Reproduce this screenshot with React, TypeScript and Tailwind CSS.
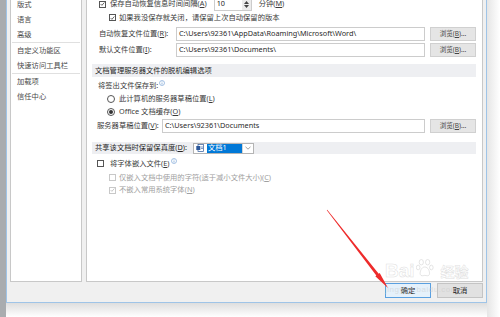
import React from "react";

const FONT = "font-['Noto_Sans','Noto_Sans_CJK_SC',sans-serif]";

function Box({ checked, disabled }: { checked?: boolean; disabled?: boolean }) {
  return (
    <span
      className={`flex h-[7px] w-[7px] shrink-0 items-center justify-center border bg-white ${
        disabled ? "border-[#c8c8c8]" : "border-[#555555]"
      }`}
    >
      {checked && (
        <svg width="6" height="6" viewBox="0 0 6 6">
          <path
            d="M0.8 3.1 L2.3 4.6 L5.2 1.2"
            fill="none"
            stroke={disabled ? "#b4b4b4" : "#333"}
            strokeWidth="0.9"
          />
        </svg>
      )}
    </span>
  );
}

function Radio({ on }: { on?: boolean }) {
  return (
    <span className="flex h-[8px] w-[8px] shrink-0 items-center justify-center rounded-full border border-[#555555] bg-white">
      {on && <span className="h-[4px] w-[4px] rounded-full bg-[#333333]" />}
    </span>
  );
}

function Info() {
  return (
    <svg width="6" height="6" viewBox="0 0 6 6" className="mb-[5px] ml-[1px]">
      <circle cx="3" cy="3" r="2.5" fill="none" stroke="#6c9bd2" strokeWidth="0.6" />
      <path d="M3 2.5v2M3 1.4v0.5" stroke="#6c9bd2" strokeWidth="0.7" />
    </svg>
  );
}

function Field({ value, w }: { value: string; w: string }) {
  return (
    <div className={`flex h-[14px] items-center border border-[#cccccc] bg-white pl-[2px] text-[#2a2a2a] ${w}`}>
      {value}
    </div>
  );
}

function Browse() {
  return (
    <div className="ml-[5px] flex h-[14px] w-[46px] items-center justify-center border border-[#d0d0d0] bg-[#e5e5e5] text-[6.5px] text-[#444444]">
      浏览(<span className="underline">B</span>)...
    </div>
  );
}

const navTop = ["版式", "语言", "高级"];
const navMid = ["自定义功能区", "快速访问工具栏"];
const navBot = ["加载项", "信任中心"];

export default function App() {
  return (
    <div className={`relative flex h-[317px] w-[500px] overflow-hidden bg-white text-[7.3px] leading-none text-[#3a3a3a] ${FONT}`}>
      <div className="w-[6px] shrink-0 bg-[#a9acaf]" />

      <div className="flex w-[481px] shrink-0 flex-col">
        <div className="flex h-[303px] flex-col border-x border-b border-[#9fc4e7] bg-[#f0f0f0]">
          <div className="flex h-[282px] gap-[4px] pl-[3px]">
            {/* left nav */}
            <div className="w-[72px] border-x border-b border-[#c8c8c8] bg-white">
              <div className="-mt-[3px] flex flex-col text-[#4a4a4a]">
                {navTop.map((t) => (
                  <div key={t} className="flex h-[15px] items-center pl-[6px]">{t}</div>
                ))}
                <div className="mx-[1px] h-px bg-[#e0e0e0]" />
                {navMid.map((t) => (
                  <div key={t} className="flex h-[15px] items-center pl-[6px]">{t}</div>
                ))}
                <div className="mx-[1px] h-px bg-[#e0e0e0]" />
                {navBot.map((t) => (
                  <div key={t} className="flex h-[15px] items-center pl-[6px]">{t}</div>
                ))}
              </div>
            </div>

            {/* right panel */}
            <div className="w-[397px] border-x border-b border-[#c8c8c8] bg-white pl-[5px] pr-[6px]">
              <div className="-mt-[3px] flex flex-col">
                <div className="flex h-[14px] items-center pl-[7px]">
                  <Box checked />
                  <span className="ml-[4px]">保存自动恢复信息时间间隔(<span className="underline">A</span>)</span>
                  <div className="ml-[7px] flex h-[14px] w-[38px] items-center border border-[#cccccc] bg-white">
                    <span className="flex-1 pl-[2px] text-[#222222]">10</span>
                    <div className="flex h-full w-[9px] flex-col items-center justify-center gap-[1px] bg-[#ececec]">
                      <svg width="5" height="3" viewBox="0 0 5 3"><path d="M0 3L2.5 0L5 3Z" fill="#444" /></svg>
                      <svg width="5" height="3" viewBox="0 0 5 3"><path d="M0 0L2.5 3L5 0Z" fill="#444" /></svg>
                    </div>
                  </div>
                  <span className="ml-[7px]">分钟(<span className="underline">M</span>)</span>
                </div>

                <div className="flex h-[13px] items-center pl-[17px]">
                  <Box checked />
                  <span className="ml-[3px]">如果我没保存就关闭，请保留上次自动保留的版本</span>
                </div>

                <div className="mt-[3px] flex h-[14px] items-center pl-[7px]">
                  <span className="w-[77px]">自动恢复文件位置(<span className="underline">R</span>):</span>
                  <Field w="w-[249px]" value="C:\Users\92361\AppData\Roaming\Microsoft\Word\" />
                  <Browse />
                </div>

                <div className="mt-[2px] flex h-[14px] items-center pl-[7px]">
                  <span className="w-[77px]">默认文件位置(<span className="underline">I</span>):</span>
                  <Field w="w-[249px]" value="C:\Users\92361\Documents\" />
                  <Browse />
                </div>

                <div className="mt-[7px] flex h-[13px] items-center bg-[#eeeff2] pl-[3px] text-[#262626]">
                  文档管理服务器文件的脱机编辑选项
                </div>

                <div className="mt-[2px] flex h-[13px] items-center pl-[6px]">
                  <span>将签出文件保存到:</span>
                  <Info />
                </div>

                <div className="flex h-[13px] items-center pl-[15px]">
                  <Radio />
                  <span className="ml-[4px]">此计算机的服务器草稿位置(<span className="underline">L</span>)</span>
                </div>

                <div className="flex h-[13px] items-center pl-[15px]">
                  <Radio on />
                  <span className="ml-[4px]">Office 文档缓存(<span className="underline">O</span>)</span>
                </div>

                <div className="mt-[1px] flex h-[14px] items-center pl-[5px]">
                  <span className="w-[65px]">服务器草稿位置(<span className="underline">V</span>):</span>
                  <Field w="w-[263px]" value="C:\Users\92361\Documents" />
                  <Browse />
                </div>

                <div className="mt-[9px] flex h-[12px] items-center bg-[#eeeff2] pl-[3px] text-[#262626]">
                  <span className="w-[98px]">共享该文档时保留保真度(<span className="underline">D</span>):</span>
                  <div className="flex h-[11px] w-[61px] items-center border border-[#b4b4b4] bg-white">
                    <svg width="8" height="8" viewBox="0 0 8 8" className="ml-[2px] shrink-0">
                      <rect x="2" y="0.5" width="5.5" height="7" fill="#fff" stroke="#2b579a" strokeWidth="0.7" />
                      <rect x="0.3" y="2" width="4" height="4" fill="#2b579a" />
                      <path d="M5 3h2M5 4.5h2" stroke="#2b579a" strokeWidth="0.6" />
                    </svg>
                    <span className="ml-[3px] flex h-[9px] flex-1 items-center bg-[#0078d7] pl-[1px] text-white">文档1</span>
                    <span className="flex h-full w-[11px] items-center justify-center border-l border-[#d4d4d4]">
                      <svg width="6" height="4" viewBox="0 0 6 4"><path d="M0.5 0.8L3 3.2L5.5 0.8" fill="none" stroke="#777" strokeWidth="0.7" /></svg>
                    </span>
                  </div>
                </div>

                <div className="mt-[3px] flex h-[13px] items-center pl-[5px]">
                  <Box />
                  <span className="ml-[6px]">将字体嵌入文件(<span className="underline">E</span>)</span>
                  <Info />
                </div>

                <div className="mt-[1px] flex h-[13px] items-center pl-[17px] text-[#a0a0a0]">
                  <Box disabled />
                  <span className="ml-[3px]">仅嵌入文档中使用的字符(适于减小文件大小)(<span className="underline">C</span>)</span>
                </div>

                <div className="flex h-[12px] items-center pl-[17px] text-[#a0a0a0]">
                  <Box checked disabled />
                  <span className="ml-[3px]">不嵌入常用系统字体(<span className="underline">N</span>)</span>
                </div>
              </div>
            </div>
          </div>

          <div className="mt-[1px] flex justify-end gap-[6px] pr-[3px]">
            <div className="flex h-[15px] w-[46px] items-center justify-center border border-[#5aa0e0] bg-[#e5f1fb] text-[#222222]">
              确定
            </div>
            <div className="flex h-[15px] w-[46px] items-center justify-center border border-[#c4c4c4] bg-[#e1e1e1] text-[#222222]">
              取消
            </div>
          </div>
        </div>
        <div className="h-[14px] bg-gradient-to-b from-[#dedede] to-white" />
      </div>

      <div className="w-[13px] shrink-0 bg-gradient-to-r from-[#e6e6e6] to-white" />

      {/* watermark */}
      <div className="pointer-events-none absolute left-[385px] top-[258px] flex flex-col opacity-70">
        <div className="flex items-end">
          <span className="font-['Liberation_Sans',sans-serif] text-[19px] font-bold text-white/70 [-webkit-text-stroke:0.5px_rgba(160,160,160,0.5)]">Bai</span>
          <svg width="18" height="19" viewBox="0 0 17 18" className="mb-[3px] ml-[1px]">
            <g fill="rgba(255,255,255,0.7)" stroke="rgba(160,160,160,0.5)" strokeWidth="0.7">
              <ellipse cx="5" cy="4" rx="2" ry="2.6" />
              <ellipse cx="11" cy="4" rx="2" ry="2.6" />
              <ellipse cx="2" cy="9" rx="1.7" ry="2.2" />
              <ellipse cx="14.5" cy="9" rx="1.7" ry="2.2" />
              <path d="M8.3 8.5C5 8.5 3.5 13 4 15.5C4.7 17.6 7 16.5 8.3 16.5C9.8 16.5 12 17.6 12.7 15.5C13.2 13 11.6 8.5 8.3 8.5Z" />
            </g>
          </svg>
          <span className="ml-[7px] mb-[1px] text-[14px] font-bold text-white/70 [-webkit-text-stroke:0.5px_rgba(160,160,160,0.5)]">经验</span>
        </div>
        <span className="mt-[6px] font-['Liberation_Sans',sans-serif] text-[8px] tracking-[0.5px] text-[#c8c8c8]/70">jingyan.baidu.com</span>
      </div>

      {/* red arrow */}
      <svg className="pointer-events-none absolute left-0 top-0" width="500" height="317" viewBox="0 0 500 317">
        <polygon
          points="326.8,210.2 376.3,275.5 375.3,276.3 388,288 379.7,272.9 378.7,273.7 327.2,209.8"
          fill="#ee2b2b"
        />
      </svg>
    </div>
  );
}
